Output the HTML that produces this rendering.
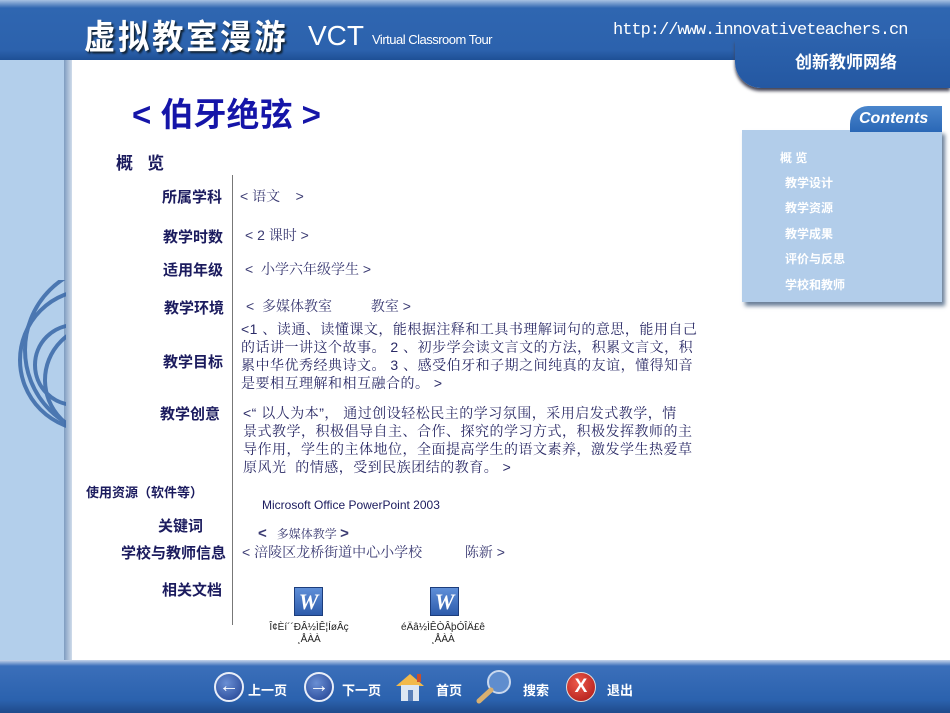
<!DOCTYPE html>
<html><head><meta charset="utf-8"><style>
*{margin:0;padding:0;box-sizing:border-box}
body{width:950px;height:713px;position:relative;overflow:hidden;background:#fff;font-family:"Liberation Sans","Noto Sans CJK SC",sans-serif}
.a{position:absolute;white-space:nowrap}
.lb{font-weight:bold;color:#1b1b5e;font-size:15px;font-family:"Liberation Sans","Noto Sans CJK SC",sans-serif}
.v{color:#3a3a72;font-size:14px;font-family:"Liberation Sans","Noto Serif CJK SC",serif}
.p{position:absolute;white-space:nowrap;color:#2a2a66;font-size:14px;line-height:18px;letter-spacing:.5px;font-family:"Liberation Sans","Noto Serif CJK SC",serif}
.m{color:#fff;font-size:12px;font-weight:bold}
.n{color:#fff;font-size:13px;font-weight:bold}
</style></head><body>
<div class="a" style="left:0;top:55px;width:70px;height:610px;background:#b3cfeb"></div>
<div class="a" style="left:64px;top:55px;width:8px;height:610px;background:linear-gradient(90deg,#7e9cc0,#d0dceb)"></div>
<svg class="a" style="left:0;top:280px" width="66" height="150"><g fill="none" stroke="#3a68a8" stroke-width="4" opacity=".85"><circle cx="90" cy="80" r="70"/><circle cx="100" cy="100" r="55"/><circle cx="75" cy="85" r="40"/><circle cx="110" cy="70" r="85"/></g></svg>
<div class="a" style="left:0;top:0;width:950px;height:60px;background:linear-gradient(#a7c1e2 0,#2f66b1 8px,#2c62ad 50px,#1e4f95 60px)"></div>
<div class="a" style="left:735px;top:40px;width:215px;height:48px;background:linear-gradient(#2c62ad,#2458a2);border-bottom-left-radius:26px;box-shadow:0 3px 3px #445"></div>
<div class="a" style="left:84px;top:10px;color:#fff;font-size:34px;font-weight:bold;letter-spacing:3px;text-shadow:2px 2px 2px #123;font-family:'Noto Sans CJK SC',sans-serif;transform:scaleX(.92);transform-origin:left">虚拟教室漫游</div>
<div class="a" style="left:308px;top:20px;color:#fff;font-size:28px">VCT</div>
<div class="a" style="left:372px;top:32px;color:#fff;font-size:13px;letter-spacing:-.5px">Virtual Classroom Tour</div>
<div class="a" style="left:613px;top:21px;color:#fff;font-size:17px;font-family:'Liberation Mono',monospace;letter-spacing:-1px">http://www.innovativeteachers.cn</div>
<div class="a" style="left:795px;top:48px;color:#fff;font-size:17px;font-weight:bold">创新教师网络</div>
<div class="a" style="left:132px;top:88px;color:#1515a8;font-size:33px;font-weight:bold">&lt; 伯牙绝弦 &gt;</div>
<div class="a" style="left:742px;top:130px;width:200px;height:172px;background:#b2cdea;box-shadow:3px 4px 4px #6a7f99"></div>
<div class="a" style="left:850px;top:106px;width:92px;height:26px;background:linear-gradient(#4a86cc,#2a67b6);border-top-left-radius:18px"></div>
<div class="a" style="left:859px;top:110px;color:#fff;font-size:16px;font-weight:bold;font-style:italic">Contents</div>
<div class="a m" style="left:780px;top:149px">概 览</div>
<div class="a m" style="left:785px;top:174px">教学设计</div>
<div class="a m" style="left:785px;top:199px">教学资源</div>
<div class="a m" style="left:785px;top:225px">教学成果</div>
<div class="a m" style="left:785px;top:250px">评价与反思</div>
<div class="a m" style="left:785px;top:276px">学校和教师</div>
<div class="a lb" style="left:116px;top:149px;font-size:17px">概&nbsp;&nbsp;&nbsp;览</div>
<div class="a" style="left:232px;top:175px;width:1px;height:450px;background:#777"></div>
<div class="a lb" style="left:162px;top:186px">所属学科</div><div class="a v" style="left:240px;top:186px">&lt; 语文&nbsp;&nbsp;&nbsp;&nbsp;&gt;</div>
<div class="a lb" style="left:163px;top:226px">教学时数</div><div class="a v" style="left:245px;top:225px">&lt; 2 课时 &gt;</div>
<div class="a lb" style="left:163px;top:259px">适用年级</div><div class="a v" style="left:245px;top:259px">&lt;&nbsp; 小学六年级学生 &gt;</div>
<div class="a lb" style="left:164px;top:297px">教学环境</div><div class="a v" style="left:246px;top:296px">&lt;&nbsp; 多媒体教室&nbsp;&nbsp;&nbsp;&nbsp;&nbsp;&nbsp;&nbsp;&nbsp;&nbsp; 教室 &gt;</div>
<div class="a lb" style="left:163px;top:351px">教学目标</div>
<div class="p" style="left:241px;top:320px">&lt;1 、读通、读懂课文，能根据注释和工具书理解词句的意思，能用自己<br>的话讲一讲这个故事。 2 、初步学会读文言文的方法，积累文言文，积<br>累中华优秀经典诗文。 3 、感受伯牙和子期之间纯真的友谊，懂得知音<br>是要相互理解和相互融合的。 &gt;</div>
<div class="a lb" style="left:160px;top:403px">教学创意</div>
<div class="p" style="left:243px;top:404px">&lt;“ 以人为本”， 通过创设轻松民主的学习氛围，采用启发式教学，情<br>景式教学，积极倡导自主、合作、探究的学习方式，积极发挥教师的主<br>导作用，学生的主体地位，全面提高学生的语文素养，激发学生热爱草<br>原风光&nbsp; 的情感，受到民族团结的教育。 &gt;</div>
<div class="a lb" style="left:86px;top:482px;font-size:13px">使用资源（软件等）</div>
<div class="a" style="left:262px;top:498px;color:#1b1b5e;font-size:12px">Microsoft Office PowerPoint 2003</div>
<div class="a lb" style="left:158px;top:515px">关键词</div>
<div class="a v" style="left:258px;top:525px;font-size:12px"><b style="font-size:15px">&lt;</b>&nbsp;&nbsp; 多媒体教学 <b style="font-size:15px">&gt;</b></div>
<div class="a lb" style="left:121px;top:542px">学校与教师信息</div>
<div class="a v" style="left:242px;top:542px">&lt; 涪陵区龙桥街道中心小学校&nbsp;&nbsp;&nbsp;&nbsp;&nbsp;&nbsp;&nbsp;&nbsp;&nbsp;&nbsp; 陈新 &gt;</div>
<div class="a lb" style="left:162px;top:579px">相关文档</div>
<div class="a" style="left:294px;top:587px;width:29px;height:29px;background:linear-gradient(#5f8fd8,#2d5bab);border:1px solid #1c3d7c;color:#fff;font:italic bold 22px 'Liberation Serif',serif;text-align:center;line-height:27px">W</div>
<div class="a" style="left:430px;top:587px;width:29px;height:29px;background:linear-gradient(#5f8fd8,#2d5bab);border:1px solid #1c3d7c;color:#fff;font:italic bold 22px 'Liberation Serif',serif;text-align:center;line-height:27px">W</div>
<div class="a" style="left:259px;top:622px;font-size:10px;color:#222;text-align:center;width:100px;line-height:12px">Î¢Èí´´ÐÂ½ÌÊ¦ÍøÂç<br>¸ÅÀÀ</div>
<div class="a" style="left:393px;top:622px;font-size:10px;color:#222;text-align:center;width:100px;line-height:12px">éÄâ½ÌÊÒÂþÓÎÄ£ê<br>¸ÅÀÀ</div>
<div class="a" style="left:0;top:660px;width:950px;height:53px;background:linear-gradient(#c6d4ea 0,#3b6fba 6px,#2b62ae 40px,#1f4a8a 53px)"></div>
<div class="a" style="left:214px;top:672px;width:30px;height:30px;border-radius:50%;background:radial-gradient(circle at 40% 35%,#6a8fd4,#1f3f8f);border:2px solid #e9eef8;color:#fff;font-size:20px;font-weight:bold;text-align:center;line-height:24px">←</div>
<div class="a n" style="left:248px;top:680px">上一页</div>
<div class="a" style="left:304px;top:672px;width:30px;height:30px;border-radius:50%;background:radial-gradient(circle at 40% 35%,#6a8fd4,#1f3f8f);border:2px solid #e9eef8;color:#fff;font-size:20px;font-weight:bold;text-align:center;line-height:24px">→</div>
<div class="a n" style="left:342px;top:680px">下一页</div>
<svg class="a" style="left:393px;top:670px" width="34" height="34"><path d="M3 16 L17 4 L31 16 Z" fill="#f2b94a"/><rect x="8" y="15" width="18" height="16" fill="#dde6f2"/><rect x="15" y="20" width="5" height="11" fill="#5a7fb8"/><rect x="24" y="4" width="4" height="8" fill="#c9502c"/></svg>
<div class="a n" style="left:436px;top:680px">首页</div>
<svg class="a" style="left:475px;top:668px" width="40" height="36"><circle cx="24" cy="14" r="11" fill="#5f8dce" stroke="#c9d8ee" stroke-width="2"/><path d="M16 22 L4 33" stroke="#d9b070" stroke-width="5" stroke-linecap="round"/></svg>
<div class="a n" style="left:523px;top:680px">搜索</div>
<div class="a" style="left:566px;top:672px;width:30px;height:30px;border-radius:50%;background:radial-gradient(circle at 40% 35%,#ee5a4a,#a81414);border:1px solid #ddd;color:#fff;font-size:19px;font-weight:bold;text-align:center;line-height:28px">X</div>
<div class="a n" style="left:607px;top:680px">退出</div>
</body></html>
